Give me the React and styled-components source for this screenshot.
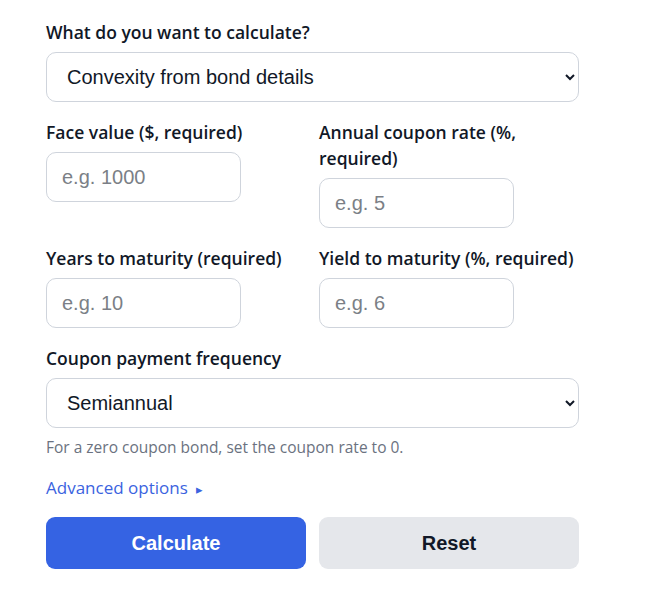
import React, { useState } from "react";
import styled, { createGlobalStyle } from "styled-components";

const GlobalStyle = createGlobalStyle`
  body {
    margin: 0;
    background: #ffffff;
    font-family: "Open Sans", "Noto Sans", sans-serif;
    color: #111827;
  }
`;

const App = () => {
  const [mode, setMode] = useState("bond");
  const [frequency, setFrequency] = useState("2");

  return (
    <>
      <GlobalStyle />
      <StyledForm onSubmit={(e) => e.preventDefault()}>
        <StyledField>
          <StyledLabel htmlFor="mode">What do you want to calculate?</StyledLabel>
          <StyledSelect id="mode" value={mode} onChange={(e) => setMode(e.target.value)}>
            <option value="bond">Convexity from bond details</option>
            <option value="cash">Convexity from cash flows</option>
          </StyledSelect>
        </StyledField>

        <StyledGrid>
          <StyledField>
            <StyledLabel htmlFor="face">Face value ($, required)</StyledLabel>
            <StyledInput id="face" placeholder="e.g. 1000" />
          </StyledField>
          <StyledField>
            <StyledLabel htmlFor="coupon">Annual coupon rate (%, required)</StyledLabel>
            <StyledInput id="coupon" placeholder="e.g. 5" />
          </StyledField>
          <StyledField>
            <StyledLabel htmlFor="years">Years to maturity (required)</StyledLabel>
            <StyledInput id="years" placeholder="e.g. 10" />
          </StyledField>
          <StyledField>
            <StyledLabel htmlFor="ytm">Yield to maturity (%, required)</StyledLabel>
            <StyledInput id="ytm" placeholder="e.g. 6" />
          </StyledField>
        </StyledGrid>

        <StyledField>
          <StyledLabel htmlFor="freq">Coupon payment frequency</StyledLabel>
          <StyledSelect id="freq" value={frequency} onChange={(e) => setFrequency(e.target.value)}>
            <option value="1">Annual</option>
            <option value="2">Semiannual</option>
            <option value="4">Quarterly</option>
            <option value="12">Monthly</option>
          </StyledSelect>
          <StyledHint>For a zero coupon bond, set the coupon rate to 0.</StyledHint>
        </StyledField>

        <StyledToggle type="button">
          Advanced options <StyledCaret>▸</StyledCaret>
        </StyledToggle>

        <StyledButtons>
          <StyledButton type="submit" $primary>Calculate</StyledButton>
          <StyledButton type="reset">Reset</StyledButton>
        </StyledButtons>
      </StyledForm>
    </>
  );
};

const StyledForm = styled.form`
  width: 533px;
  padding: 19px 0 0 46px;
  display: flex;
  flex-direction: column;
`;

const StyledField = styled.div`
  display: flex;
  flex-direction: column;
  align-items: flex-start;
  margin-bottom: 17px;
`;

const StyledGrid = styled.div`
  display: grid;
  grid-template-columns: 1fr 1fr;
  column-gap: 13px;
  align-items: start;
`;

const StyledLabel = styled.label`
  font-size: 17.5px;
  font-weight: 600;
  line-height: 26px;
  margin-bottom: 7px;
  color: #111827;
`;

const StyledInput = styled.input`
  box-sizing: border-box;
  width: 195px;
  height: 50px;
  padding: 0 15px;
  border: 1px solid #cfd4dc;
  border-radius: 10px;
  font-family: "Liberation Sans", Arial, sans-serif;
  font-size: 20px;
  color: #111827;
  background: #fff;
  outline: none;

  &::placeholder {
    color: #7b7f86;
  }
`;

const StyledSelect = styled.select`
  box-sizing: border-box;
  width: 100%;
  height: 50px;
  padding: 0 14px 0 16px;
  border: 1px solid #cfd4dc;
  border-radius: 10px;
  font-family: "Liberation Sans", Arial, sans-serif;
  font-size: 20px;
  color: #111827;
  background: #fff;
  outline: none;
`;

const StyledHint = styled.p`
  margin: 8px 0 0;
  font-size: 15.5px;
  line-height: 22px;
  color: #6b7280;
`;

const StyledToggle = styled.button`
  align-self: flex-start;
  padding: 0;
  margin: 0 0 15px;
  border: none;
  background: none;
  font-family: "Open Sans", "Noto Sans", sans-serif;
  font-size: 17px;
  font-weight: 500;
  line-height: 26px;
  color: #3b63e0;
  cursor: pointer;
`;

const StyledCaret = styled.span`
  font-size: 13px;
  margin-left: 4px;
`;

const StyledButtons = styled.div`
  display: grid;
  grid-template-columns: 1fr 1fr;
  column-gap: 13px;
`;

const StyledButton = styled.button`
  height: 52px;
  border: none;
  border-radius: 9px;
  font-family: "Liberation Sans", Arial, sans-serif;
  font-size: 20px;
  font-weight: 700;
  cursor: pointer;
  background: ${(p) => (p.$primary ? "#3563e3" : "#e5e7eb")};
  color: ${(p) => (p.$primary ? "#ffffff" : "#111827")};
`;

export default App;
